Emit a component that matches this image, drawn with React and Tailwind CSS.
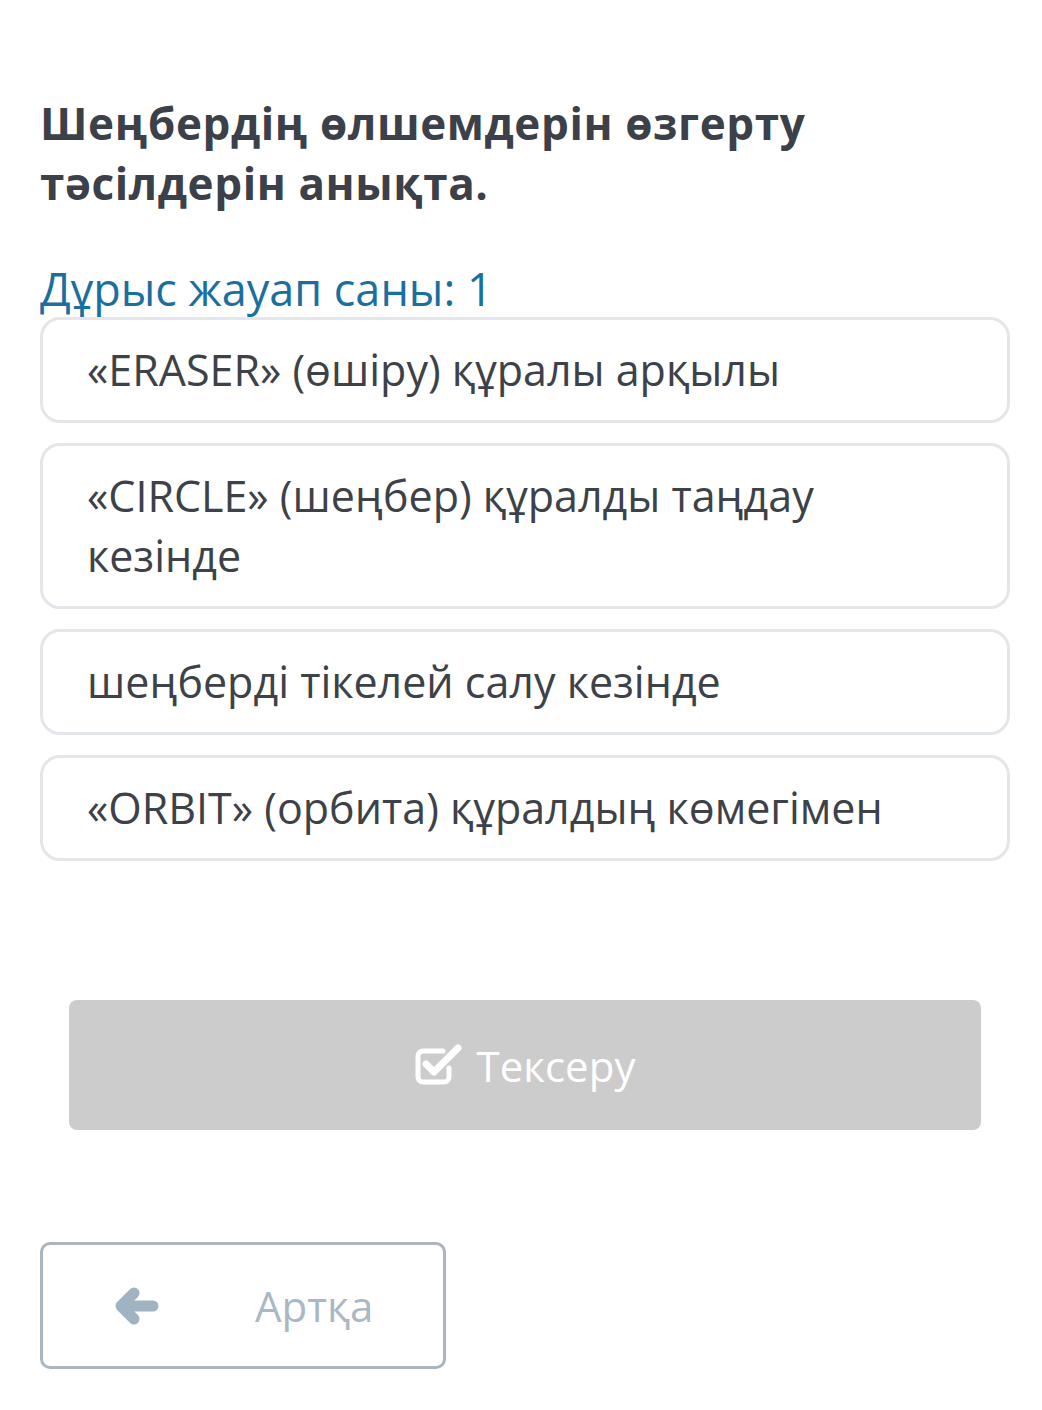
import React from 'react';

const options = [
  '«ERASER» (өшіру) құралы арқылы',
  '«CIRCLE» (шеңбер) құралды таңдау кезінде',
  'шеңберді тікелей салу кезінде',
  '«ORBIT» (орбита) құралдың көмегімен',
];

function CheckSquareIcon() {
  return (
    <svg viewBox="0 0 48 42" className="w-[48px] h-[42px]" fill="none">
      <path d="M34 24v9a5 5 0 0 1-5 5H8a5 5 0 0 1-5-5V12a5 5 0 0 1 5-5h20" stroke="white" strokeWidth="5" strokeLinecap="round" />
      <path d="M11 20l8 8L43 4" stroke="white" strokeWidth="7" strokeLinecap="round" strokeLinejoin="round" />
    </svg>
  );
}

function ArrowLeftIcon() {
  return (
    <svg viewBox="0 0 44 38" className="w-[44px] h-[38px]" fill="none">
      <path d="M38 19H8" stroke="#9fb3c2" strokeWidth="11" strokeLinecap="round" />
      <path d="M19 6L6 19l13 13" stroke="#9fb3c2" strokeWidth="11" strokeLinecap="round" strokeLinejoin="round" />
    </svg>
  );
}

export default function App() {
  return (
    <div className="w-[1042px] min-h-[1410px] bg-white font-['Open_Sans',sans-serif] px-[40px] pt-[93px]">
      <h1 className="text-[44px] leading-[60px] font-bold text-[#3b4049] tracking-[0.6px]">
        Шеңбердің өлшемдерін өзгерту тәсілдерін анықта.
      </h1>

      <p className="mt-[48px] text-[45px] leading-[56px] text-[#1b6f9f]">Дұрыс жауап саны: 1</p>

      <div className="w-[970px] flex flex-col gap-[20px]">
        {options.map((o) => (
          <div
            key={o}
            className="border-[3px] border-[#e3e6ea] rounded-[20px] pl-[44px] pr-[40px] py-[20px] text-[43px] leading-[60px] text-[#3d4148]"
          >
            {o}
          </div>
        ))}
      </div>

      <div className="mt-[139px] pl-[29px] pr-[21px]">
        <div className="h-[130px] bg-[#cccccc] rounded-[8px] flex items-center justify-center gap-[14px] text-white text-[42px]">
          <CheckSquareIcon />
          <span>Тексеру</span>
        </div>
      </div>

      <div className="mt-[112px] w-[406px] h-[127px] border-[3px] border-[#aab5bd] rounded-[10px] flex items-center pl-[72px]">
        <ArrowLeftIcon />
        <span className="ml-[96px] text-[42px] text-[#a9b8c3]">Артқа</span>
      </div>
    </div>
  );
}
